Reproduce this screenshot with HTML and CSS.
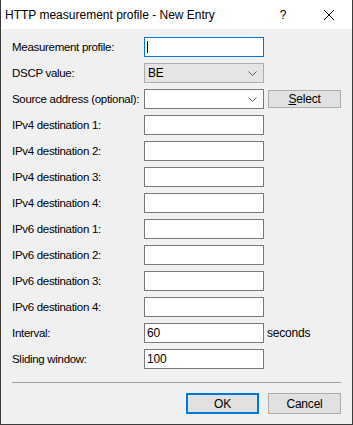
FILE: index.html
```html
<!DOCTYPE html>
<html lang="en">
<head>
  <meta charset="UTF-8">
  <title>HTTP measurement profile - New Entry</title>
  <link rel="stylesheet" href="styles.css">
</head>
<body>

  <div class="window">
    <!-- Title bar -->
    <header class="titlebar">
      <span class="title">HTTP measurement profile - New Entry</span>
      <span class="help">?</span>
      <span class="close">
        <svg width="12" height="12" viewBox="0 0 12 12"><path d="M1 1L11 11M11 1L1 11" stroke="#000" stroke-width="1" fill="none"/></svg>
      </span>
    </header>

    <!-- Form -->
    <main class="content">
      <div class="form">
        <label>Measurement profile:</label>
        <div class="input focus"><span class="caret"></span></div>
        <div></div>

        <label>DSCP value:</label>
        <div class="combo readonly">
          <span>BE</span>
          <svg class="chev" width="9" height="5" viewBox="0 0 9 5"><path d="M0.5 0.5L4.5 4.5L8.5 0.5" stroke="#606060" fill="none"/></svg>
        </div>
        <div></div>

        <label>Source address (optional):</label>
        <div class="combo">
          <span></span>
          <svg class="chev" width="9" height="5" viewBox="0 0 9 5"><path d="M0.5 0.5L4.5 4.5L8.5 0.5" stroke="#606060" fill="none"/></svg>
        </div>
        <button class="btn small"><u>S</u>elect</button>

        <label>IPv4 destination 1:</label>
        <div class="input"></div>
        <div></div>

        <label>IPv4 destination 2:</label>
        <div class="input"></div>
        <div></div>

        <label>IPv4 destination 3:</label>
        <div class="input"></div>
        <div></div>

        <label>IPv4 destination 4:</label>
        <div class="input"></div>
        <div></div>

        <label>IPv6 destination 1:</label>
        <div class="input"></div>
        <div></div>

        <label>IPv6 destination 2:</label>
        <div class="input"></div>
        <div></div>

        <label>IPv6 destination 3:</label>
        <div class="input"></div>
        <div></div>

        <label>IPv6 destination 4:</label>
        <div class="input"></div>
        <div></div>

        <label>Interval:</label>
        <div class="input">60</div>
        <span class="unit">seconds</span>

        <label>Sliding window:</label>
        <div class="input">100</div>
        <div></div>
      </div>

      <hr class="sep">

      <div class="actions">
        <button class="btn default">OK</button>
        <button class="btn">Cancel</button>
      </div>
    </main>
  </div>

</body>
</html>
```

FILE: styles.css
```css
/* RESET */
* {
  margin: 0;
  padding: 0;
  box-sizing: border-box;
  font-family: 'Liberation Sans', Arial, sans-serif;
}

body {
  background: #f0f0f0;
  color: #000;
  font-size: 11.5px;
  letter-spacing: -0.3px;
}

/* WINDOW */
.window {
  width: 353px;
  height: 425px;
  border: 1px solid #3c3c3c;
  border-top: none;
  background: #f0f0f0;
  display: flex;
  flex-direction: column;
}

/* TITLE BAR */
.titlebar {
  height: 29px;
  background: #fff;
  display: flex;
  align-items: center;
  padding-left: 4px;
  letter-spacing: 0;
}

.titlebar .title {
  flex: 1;
  font-size: 12px;
}

.titlebar .help {
  width: 46px;
  text-align: center;
  font-size: 12px;
  margin-left: 2px;
}

.titlebar .close {
  width: 46px;
  display: flex;
  justify-content: center;
}

/* CONTENT */
.content {
  flex: 1;
  padding: 8px 11px 0 11px;
}

.form {
  display: grid;
  grid-template-columns: 132px 120px auto;
  row-gap: 6px;
  align-items: center;
}

.form label {
  white-space: nowrap;
}

.input {
  height: 20px;
  background: #fff;
  border: 1px solid #7a7a7a;
  padding: 0 2px;
  line-height: 18px;
  font-size: 12px;
  letter-spacing: -0.2px;
  display: flex;
  align-items: center;
}

.input.focus {
  border-color: #0078d7;
}

.caret {
  width: 1px;
  height: 12px;
  background: #000;
}

.combo {
  height: 20px;
  background: #fff;
  border: 1px solid #7a7a7a;
  padding: 0 6px 0 3px;
  font-size: 12px;
  letter-spacing: -0.2px;
  display: flex;
  align-items: center;
  justify-content: space-between;
}

.combo.readonly {
  background: #e5e5e5;
  border-color: #adadad;
}

.unit {
  margin-left: 3px;
  font-size: 12px;
  letter-spacing: -0.2px;
}

/* BUTTONS */
.btn {
  width: 73px;
  height: 21px;
  background: #e1e1e1;
  border: 1px solid #adadad;
  font-size: 12px;
  letter-spacing: -0.2px;
  color: #000;
}

.btn.small {
  height: 18px;
  margin-left: 4px;
}

.btn.default {
  border: 2px solid #0078d7;
}

.sep {
  border: none;
  border-top: 1px solid #a0a0a0;
  margin-top: 13px;
}

.actions {
  display: flex;
  justify-content: flex-end;
  gap: 9px;
  margin-top: 10px;
}
```
